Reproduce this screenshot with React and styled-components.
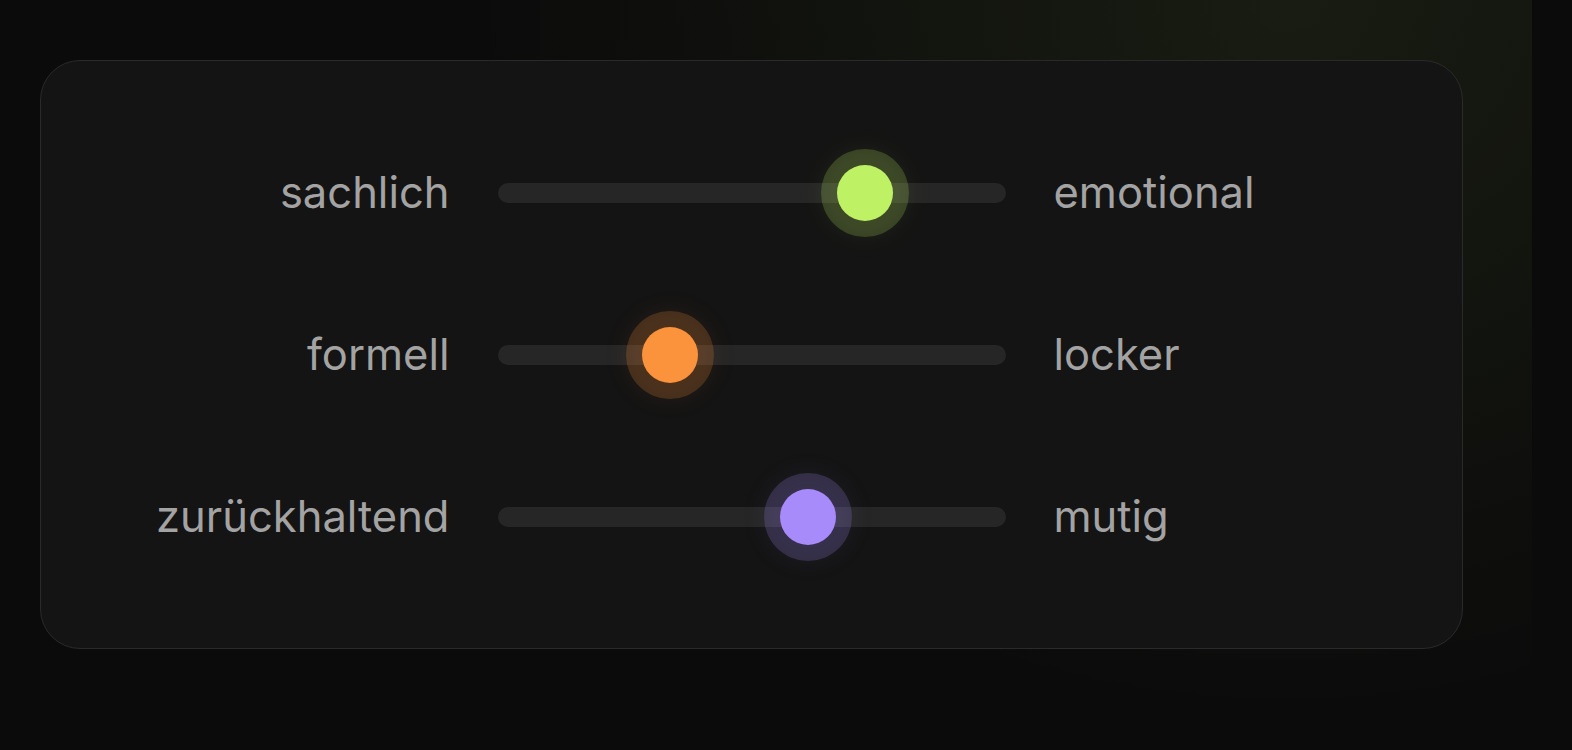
import styled, { createGlobalStyle } from "styled-components";

const GlobalStyle = createGlobalStyle`
  html, body {
    margin: 0;
    padding: 0;
    background: #0b0b0b;
  }
  body {
    font-family: Inter, "Noto Sans", sans-serif;
    -webkit-font-smoothing: antialiased;
  }
`;

const Section = styled.section`
  box-sizing: border-box;
  width: 1532px;
  height: 710px;
  padding: 60px 0 0 40px;
  background:
    radial-gradient(ellipse 820px 720px at 84% 0%, rgba(190, 242, 100, 0.075), rgba(190, 242, 100, 0) 100%),
    #0b0b0b;
`;

const Card = styled.div`
  box-sizing: border-box;
  width: 1423px;
  height: 589px;
  border-radius: 40px;
  border: 1.5px solid #2a2a2a;
  background: #141414;
  display: flex;
  flex-direction: column;
  justify-content: center;
  gap: 116px;
`;

const Row = styled.div`
  display: grid;
  grid-template-columns: 1fr 508px 1fr;
  align-items: center;
  column-gap: 48px;
  height: 46px;
`;

const Label = styled.span`
  font-size: 43.5px;
  line-height: 1;
  color: #a3a3a3;
  text-align: ${(p) => (p.$end ? "right" : "left")};
`;

const Track = styled.div`
  position: relative;
  height: 20px;
  border-radius: 10px;
  background: #262626;
`;

const Thumb = styled.div`
  position: absolute;
  top: 50%;
  width: 56px;
  height: 56px;
  border-radius: 50%;
  transform: translate(-50%, -50%);
  background: ${(p) => p.$color};
  box-shadow:
    0 0 0 16px ${(p) => p.$halo},
    0 0 30px 14px ${(p) => p.$glow};
`;

const sliders = [
  { from: "sachlich", to: "emotional", value: 72.4, color: "#bef264", rgb: "190, 242, 100" },
  { from: "formell", to: "locker", value: 34, color: "#fb923c", rgb: "251, 146, 60" },
  { from: "zurückhaltend", to: "mutig", value: 61.2, color: "#a78bfa", rgb: "167, 139, 250" },
];

export default function App() {
  return (
    <>
      <GlobalStyle />
      <Section>
        <Card>
          {sliders.map((s) => (
            <Row key={s.from}>
              <Label $end>{s.from}</Label>
              <Track>
                <Thumb
                  style={{ left: `${s.value}%` }}
                  $color={s.color}
                  $halo={`rgba(${s.rgb}, 0.2)`}
                  $glow={`rgba(${s.rgb}, 0.08)`}
                />
              </Track>
              <Label>{s.to}</Label>
            </Row>
          ))}
        </Card>
      </Section>
    </>
  );
}
